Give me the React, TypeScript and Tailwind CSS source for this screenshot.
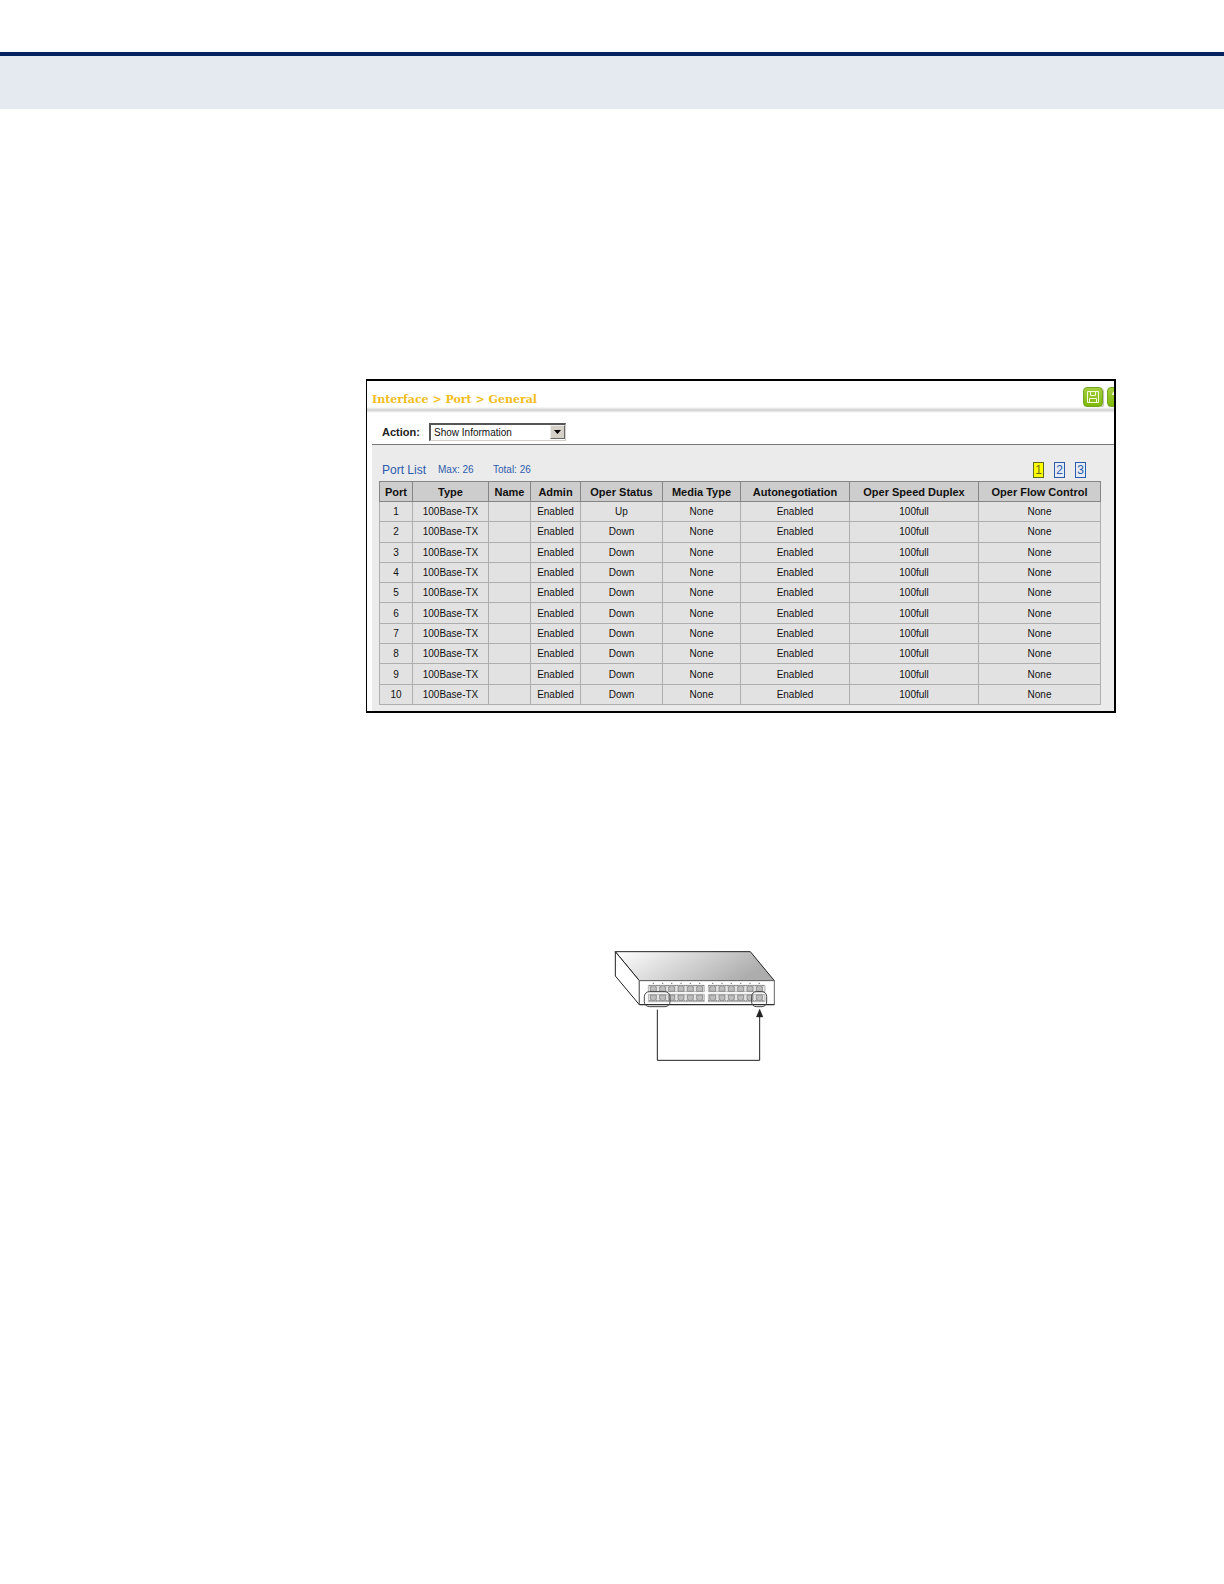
import { useState } from 'react';

const columns = [
  { name: 'Port', width: 'w-[33px]' },
  { name: 'Type', width: 'w-[76px]' },
  { name: 'Name', width: 'w-[42px]' },
  { name: 'Admin', width: 'w-[50px]' },
  { name: 'Oper Status', width: 'w-[82px]' },
  { name: 'Media Type', width: 'w-[78px]' },
  { name: 'Autonegotiation', width: 'w-[109px]' },
  { name: 'Oper Speed Duplex', width: 'w-[129px]' },
  { name: 'Oper Flow Control', width: 'w-[122px]' },
];

const ports = Array.from({ length: 10 }, (_, i) => ({
  port: i + 1,
  type: '100Base-TX',
  name: '',
  admin: 'Enabled',
  status: i === 0 ? 'Up' : 'Down',
  media: 'None',
  autoneg: 'Enabled',
  speed: '100full',
  flow: 'None',
}));

const pages = [1, 2, 3];

const ToolButton = ({ label, children }: { label: string; children: React.ReactNode }) => (
  <button
    aria-label={label}
    className="w-5 h-5 shrink-0 rounded-sm border border-[#74a81c] bg-linear-to-b from-[#a5cf3c] to-[#7fb800] shadow-[1px_1px_1px_#bbb] flex items-center justify-center"
  >
    {children}
  </button>
);

const SaveIcon = () => (
  <svg width="14" height="14" viewBox="0 0 14 14" fill="none" stroke="#f4fbdc">
    <path d="M1.5 1.5h11v11h-11z" />
    <path d="M4.5 2v3.500h5V2M3.500 12V8.500h7V12" />
  </svg>
);

const HelpIcon = () => (
  <svg width="14" height="14" viewBox="0 0 14 14" fill="none" stroke="#f4fbdc" strokeWidth="2">
    <path d="M3 5c0-4 8-4 8 0 0 2-4 2-4 4M7 11v2" />
  </svg>
);

const PortTable = () => (
  <table className="w-full h-[224px] table-fixed border-collapse text-center leading-4 text-[#111]">
    <thead>
      <tr className="h-[20px] bg-[#cdcdcd] text-[11px]">
        {columns.map((col) => (
          <th key={col.name} className={`${col.width} border border-[#858585] p-0 whitespace-nowrap font-bold`}>
            {col.name}
          </th>
        ))}
      </tr>
    </thead>
    <tbody className="bg-[#e2e2e2] text-[10px]">
      {ports.map((row) => (
        <tr key={row.port} className="h-[20px]">
          {Object.entries(row).map(([key, value]) => (
            <td key={key} className="border border-[#aeaeae] p-0 pt-px">
              {value}
            </td>
          ))}
        </tr>
      ))}
    </tbody>
  </table>
);

const PortPanel = () => {
  const [page, setPage] = useState(1);

  return (
    <section className="overflow-hidden border-2 border-l border-black bg-white">
      <div className="flex h-[26px] pl-[5px]">
        <h1 className="pt-[11px] font-['DejaVu_Serif',serif] text-[11px] leading-4 font-bold text-[#f2bd1d]">
          Interface &gt; Port &gt; General
        </h1>
        <div className="ml-auto flex w-[31px] gap-1 overflow-hidden pt-[6px]">
          <ToolButton label="Save">
            <SaveIcon />
          </ToolButton>
          <ToolButton label="Help">
            <HelpIcon />
          </ToolButton>
        </div>
      </div>
      <div className="h-[6px] bg-linear-to-b from-white via-[#d0d0d0] to-white" />

      <div className="ml-[5px] flex items-center border-b border-[#777] pt-[10px] pb-[3px] pl-[10px]">
        <label htmlFor="action" className="w-[47px] text-[11px] leading-4 font-bold text-[#222]">
          Action:
        </label>
        <div className="relative">
          <select
            id="action"
            className="block h-[18px] w-[137px] appearance-none border border-t-2 border-l-2 border-[#d4d0c8] border-t-[#555] border-l-[#555] bg-white pl-[3px] text-[10px] leading-3 text-[#111]"
          >
            <option>Show Information</option>
          </select>
          <span className="pointer-events-none absolute top-[2px] right-[1px] flex h-[14px] w-[15px] items-center justify-center border border-[#eee] border-r-[#666] border-b-[#666] bg-[#d4d0c8]">
            <svg width="7" height="4" viewBox="0 0 7 4">
              <path d="M0 0h7L3.500 4z" fill="#000" />
            </svg>
          </span>
        </div>
      </div>

      <div className="ml-[5px] bg-[#ebebeb] pr-[13px] pb-[6px] pl-[7px]">
        <div className="flex h-[36px] items-center pt-[14px] pl-[3px] text-[10px] leading-4 text-[#2b5cab]">
          <h2 className="w-[56px] text-[12px]">Port List</h2>
          <span className="w-[55px]">Max: 26</span>
          <span>Total: 26</span>
          <nav className="ml-auto flex gap-[10px] pr-[15px] text-[12px]">
            {pages.map((n) => (
              <button
                key={n}
                onClick={() => setPage(n)}
                className={`flex h-4 w-[11px] items-center justify-center border ${
                  n === page ? 'border-[#5a6b20] bg-[#ffff00] text-[#6b6b20]' : 'border-[#2b5cab] bg-[#e4ebf5]'
                }`}
              >
                {n}
              </button>
            ))}
          </nav>
        </div>
        <PortTable />
      </div>
    </section>
  );
};

const Jack = ({ x, y, flip }: { x: number; y: number; flip?: boolean }) => (
  <g transform={`translate(${x} ${y}) scale(1 ${flip ? -1 : 1})`}>
    <path d="M-6 -9H6V-5H9V8H-9V-5H-6Z" fill="#bdbdbd" stroke="#777" strokeWidth="2" />
    <path d="M-13 -9H-8M8 -9H13" stroke="#555" strokeWidth="2" />
  </g>
);

const jackColumns = [145, 173, 200, 228, 256, 284, 323, 351, 379, 407, 435, 463];

const SwitchDiagram = () => (
  <svg width="180" height="130" viewBox="0 0 540 390" fill="none" stroke="#222" strokeWidth="3">
    <defs>
      <linearGradient id="top" x1="0" y1="0" x2="1" y2="0.3">
        <stop offset="0" stopColor="#fff" />
        <stop offset="1" stopColor="#adadad" />
      </linearGradient>
    </defs>
    <path d="M31 35H436L508 122H103Z" fill="url(#top)" />
    <path d="M31 35V108L103 194V122Z" fill="#fff" />
    <path d="M103 122H508V194H103Z" fill="#fff" stroke="#666" />
    <path d="M103 194H508" />
    <path
      d="M130 136H298V155H130ZM310 136H480V155H310ZM130 163H298V185H130ZM310 163H480V185H310Z"
      fill="#e4e4e4"
      stroke="#999"
      strokeWidth="2"
    />
    {jackColumns.map((x) => (
      <g key={x}>
        <path d={`M${x - 2} 130h4`} strokeWidth="2" />
        <Jack x={x} y={146} />
        <Jack x={x} y={173} flip />
      </g>
    ))}
    <rect x="118" y="155" width="77" height="45" rx="15" stroke="#444" />
    <rect x="440" y="155" width="45" height="45" rx="14" stroke="#444" />
    <path d="M157 209V361H464V225" />
    <path d="M464 207L474 231H454Z" fill="#222" strokeWidth="1" />
  </svg>
);

const App = () => {
  return (
    <div className="min-h-screen bg-white pt-[52px] font-['Liberation_Sans',sans-serif]">
      <header className="h-[57px] border-t-4 border-[#03235f] bg-[#e5e9f0]" />
      <main className="pt-[270px] pr-[108px] pl-[366px]">
        <PortPanel />
        <figure className="mt-[227px] pl-[239px]">
          <SwitchDiagram />
        </figure>
      </main>
    </div>
  );
};

export default App;
